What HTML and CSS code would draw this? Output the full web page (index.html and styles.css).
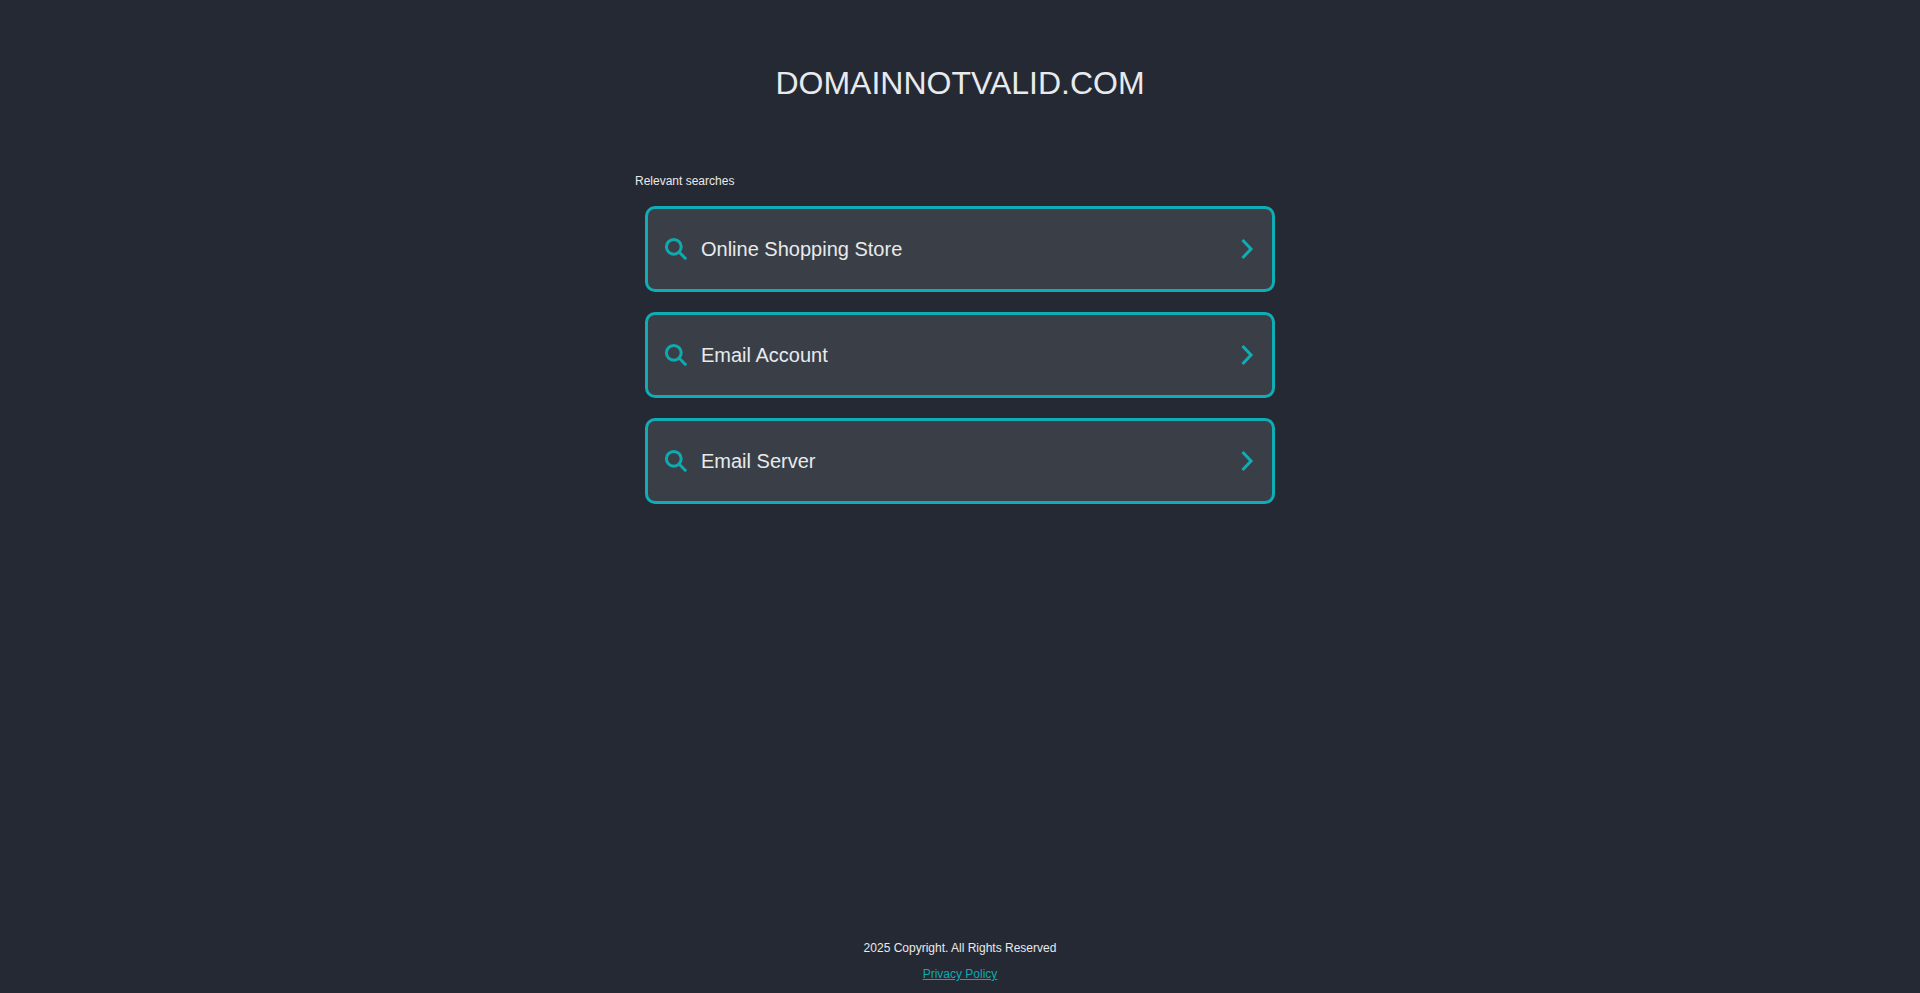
FILE: index.html
```html
<!DOCTYPE html>
<html lang="en">
<head>
<meta charset="utf-8">
<title>domainnotvalid.com</title>
<link rel="stylesheet" href="styles.css">
</head>
<body>
<div class="page">
  <header class="header"><h1 class="domain">DOMAINNOTVALID.COM</h1></header>
  <main class="results">
    <p class="label">Relevant searches</p>
    <ul class="list">
      <li><a class="card" href="#">
        <svg class="icon-search" viewBox="0 0 24 24" aria-hidden="true"><circle cx="9.8" cy="9.8" r="7.4"/><path d="M15 15 22.2 22.2"/></svg>
        <span class="card-text">Online Shopping Store</span>
        <svg class="icon-chevron" viewBox="0 0 14 22" aria-hidden="true"><path d="M2.5 2 11 11 2.5 20"/></svg>
      </a></li>
      <li><a class="card" href="#">
        <svg class="icon-search" viewBox="0 0 24 24" aria-hidden="true"><circle cx="9.8" cy="9.8" r="7.4"/><path d="M15 15 22.2 22.2"/></svg>
        <span class="card-text">Email Account</span>
        <svg class="icon-chevron" viewBox="0 0 14 22" aria-hidden="true"><path d="M2.5 2 11 11 2.5 20"/></svg>
      </a></li>
      <li><a class="card" href="#">
        <svg class="icon-search" viewBox="0 0 24 24" aria-hidden="true"><circle cx="9.8" cy="9.8" r="7.4"/><path d="M15 15 22.2 22.2"/></svg>
        <span class="card-text">Email Server</span>
        <svg class="icon-chevron" viewBox="0 0 14 22" aria-hidden="true"><path d="M2.5 2 11 11 2.5 20"/></svg>
      </a></li>
    </ul>
  </main>
  <footer class="footer">
    <p class="copy">2025 Copyright. All Rights Reserved</p>
    <a class="privacy" href="#">Privacy Policy</a>
  </footer>
</div>
</body>
</html>
```
FILE: styles.css
```css
* { box-sizing: border-box; }
html, body { margin: 0; padding: 0; height: 100%; }
body {
  background: #242933;
  color: #e8eaed;
  font-family: "Liberation Sans", Arial, sans-serif;
  overflow: hidden;
}
.page {
  height: 993px;
  display: flex;
  flex-direction: column;
  align-items: center;
}
.header { padding-top: 63px; height: 174px; }
.domain {
  margin: 0;
  font-size: 32px;
  line-height: 40px;
  font-weight: 400;
  text-align: center;
}
.results { width: 650px; flex: 1; }
.label {
  margin: 0;
  font-size: 12px;
  line-height: 14px;
}
.list {
  list-style: none;
  margin: 18px 0 0;
  padding: 0 10px;
  display: flex;
  flex-direction: column;
  gap: 20px;
}
.card {
  display: flex;
  align-items: center;
  height: 86px;
  padding: 0 18px 0 16px;
  background: #3a3f47;
  border: 3px solid #0fadb5;
  border-radius: 10px;
  color: #e8eaed;
  text-decoration: none;
}
.icon-search {
  width: 24px;
  height: 24px;
  flex: none;
  fill: none;
  stroke: #0fa9b0;
  stroke-width: 3;
}
.card-text {
  flex: 1;
  margin-left: 13px;
  font-size: 20px;
  line-height: 28px;
}
.icon-chevron {
  width: 14px;
  height: 22px;
  flex: none;
  fill: none;
  stroke: #0fadb5;
  stroke-width: 3;
}
.footer {
  height: 52px;
  text-align: center;
  font-size: 12px;
}
.copy { margin: 0 0 12px; line-height: 14px; }
.privacy { color: #0fa9b0; line-height: 14px; }
```
